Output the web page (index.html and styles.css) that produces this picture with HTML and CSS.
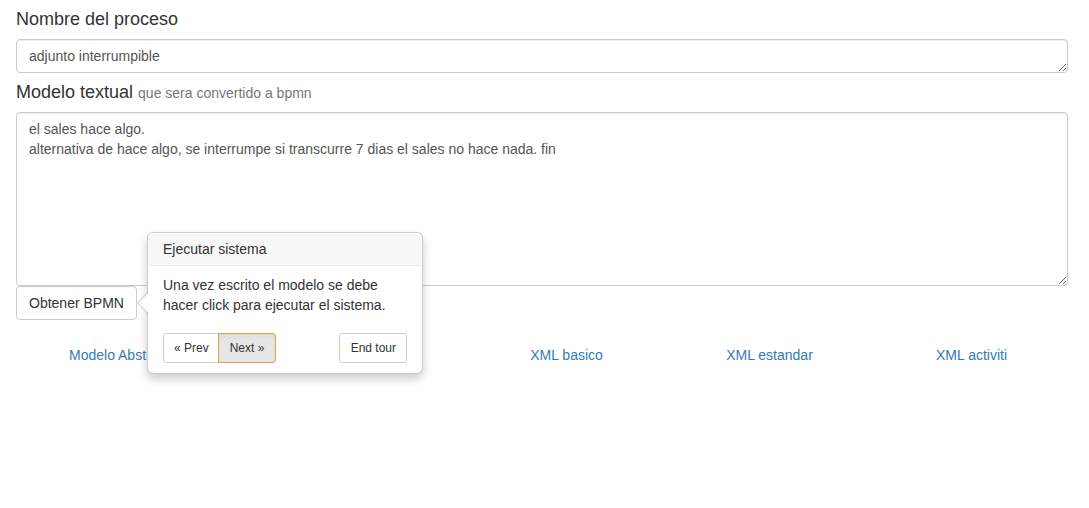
FILE: index.html
```html
<!DOCTYPE html>
<html lang="es">
<head>
<meta charset="utf-8">
<title>Proceso</title>
<link rel="stylesheet" href="styles.css">
</head>
<body>
<div class="page">
  <h4 class="section-title">Nombre del proceso</h4>
  <textarea class="form-control name-field">adjunto interrumpible</textarea>
  <h4 class="section-title">Modelo textual <small>que sera convertido a bpmn</small></h4>
  <textarea class="form-control model-field">el sales hace algo.
alternativa de hace algo, se interrumpe si transcurre 7 dias el sales no hace nada. fin</textarea>
  <div class="actions">
    <button class="btn">Obtener BPMN</button>
  </div>
  <div class="links">
    <a class="link first" href="#">Modelo Abstracto</a>
    <a class="link" href="#">BPMN</a>
    <a class="link" href="#">XML basico</a>
    <a class="link" href="#">XML estandar</a>
    <a class="link" href="#">XML activiti</a>
  </div>

  <div class="popover">
    <div class="arrow"></div>
    <h3 class="popover-title">Ejecutar sistema</h3>
    <div class="popover-content">Una vez escrito el modelo se debe hacer click para ejecutar el sistema.</div>
    <div class="popover-navigation">
      <div class="btn-group">
        <button class="btn btn-sm">« Prev</button>
        <button class="btn btn-sm active">Next »</button>
      </div>
      <button class="btn btn-sm end-btn">End tour</button>
    </div>
  </div>
</div>
</body>
</html>
```

FILE: styles.css
```css
* { box-sizing: border-box; }

html, body {
  margin: 0;
  padding: 0;
  background: #fff;
}

body {
  font-family: "Liberation Sans", Arial, Helvetica, sans-serif;
  font-size: 14px;
  line-height: 1.42857143;
  color: #333;
}

.page {
  position: relative;
  display: flow-root;
  min-height: 508px;
  padding: 0 21px 0 16px;
}

.section-title {
  margin: 10px 0;
  font-size: 18px;
  font-weight: 500;
  line-height: 19px;
  color: #333;
}

.section-title small {
  font-size: 14px;
  font-weight: normal;
  line-height: 1;
  color: #777;
}

.form-control {
  display: block;
  width: 100%;
  padding: 6px 12px;
  font-family: inherit;
  font-size: 14px;
  line-height: 1.42857143;
  color: #555;
  background: #fff;
  border: 1px solid #ccc;
  border-radius: 4px;
  box-shadow: inset 0 1px 1px rgba(0, 0, 0, .075);
  margin: 0;
}

.name-field { height: 34px; }
.model-field { height: 174px; }

.actions { display: flex; }

.btn {
  display: inline-block;
  margin: 0;
  padding: 6px 12px;
  font-family: inherit;
  font-size: 14px;
  line-height: 1.42857143;
  color: #333;
  background: #fff;
  border: 1px solid #ccc;
  border-radius: 4px;
  cursor: pointer;
  white-space: nowrap;
}

.links {
  display: grid;
  grid-template-columns: 216px 237px 195px 211px 1fr;
  margin-top: 25px;
}

.link {
  text-align: center;
  color: #337ab7;
  text-decoration: none;
}

.link.first {
  text-align: left;
  padding-left: 53px;
}

/* popover (tour step) */
.popover {
  position: absolute;
  left: 147px;
  top: 232px;
  z-index: 10;
  width: 276px;
  padding: 1px;
  background: #fff;
  border: 1px solid rgba(0, 0, 0, .2);
  border-radius: 6px;
  box-shadow: 0 5px 10px rgba(0, 0, 0, .2);
}

.popover .arrow,
.popover .arrow::after {
  position: absolute;
  display: block;
  width: 0;
  height: 0;
  border-style: solid;
  border-color: transparent;
}

.popover .arrow {
  left: -11px;
  top: 50%;
  margin-top: -11px;
  border-width: 11px 11px 11px 0;
  border-right-color: rgba(0, 0, 0, .25);
}

.popover .arrow::after {
  content: "";
  left: 1px;
  bottom: -10px;
  border-width: 10px 10px 10px 0;
  border-right-color: #fff;
}

.popover-title {
  margin: 0;
  padding: 8px 14px;
  font-size: 14px;
  font-weight: 500;
  line-height: 1.1;
  background: #f7f7f7;
  border-bottom: 1px solid #ebebeb;
  border-radius: 5px 5px 0 0;
}

.popover-content {
  padding: 9px 14px;
}

.popover-navigation {
  padding: 9px 14px;
  display: flex;
  justify-content: space-between;
  align-items: flex-start;
}

.btn-group { display: flex; }

.btn-sm {
  padding: 5px 10px;
  font-size: 12px;
  line-height: 1.5;
  border-radius: 3px;
}

.btn-group .btn:first-child { padding-right: 9px; }
.btn-group .btn:last-child { padding-left: 11px; padding-right: 11px; }
.end-btn { padding-left: 11px; }

.btn-group .btn + .btn { margin-left: -1px; }
.btn-group .btn:first-child { border-top-right-radius: 0; border-bottom-right-radius: 0; }
.btn-group .btn:last-child { border-top-left-radius: 0; border-bottom-left-radius: 0; }

.btn.active {
  position: relative;
  background: #e6e6e6;
  border-color: #dca443;
  box-shadow: inset 0 3px 5px rgba(0, 0, 0, .04);
}
```
